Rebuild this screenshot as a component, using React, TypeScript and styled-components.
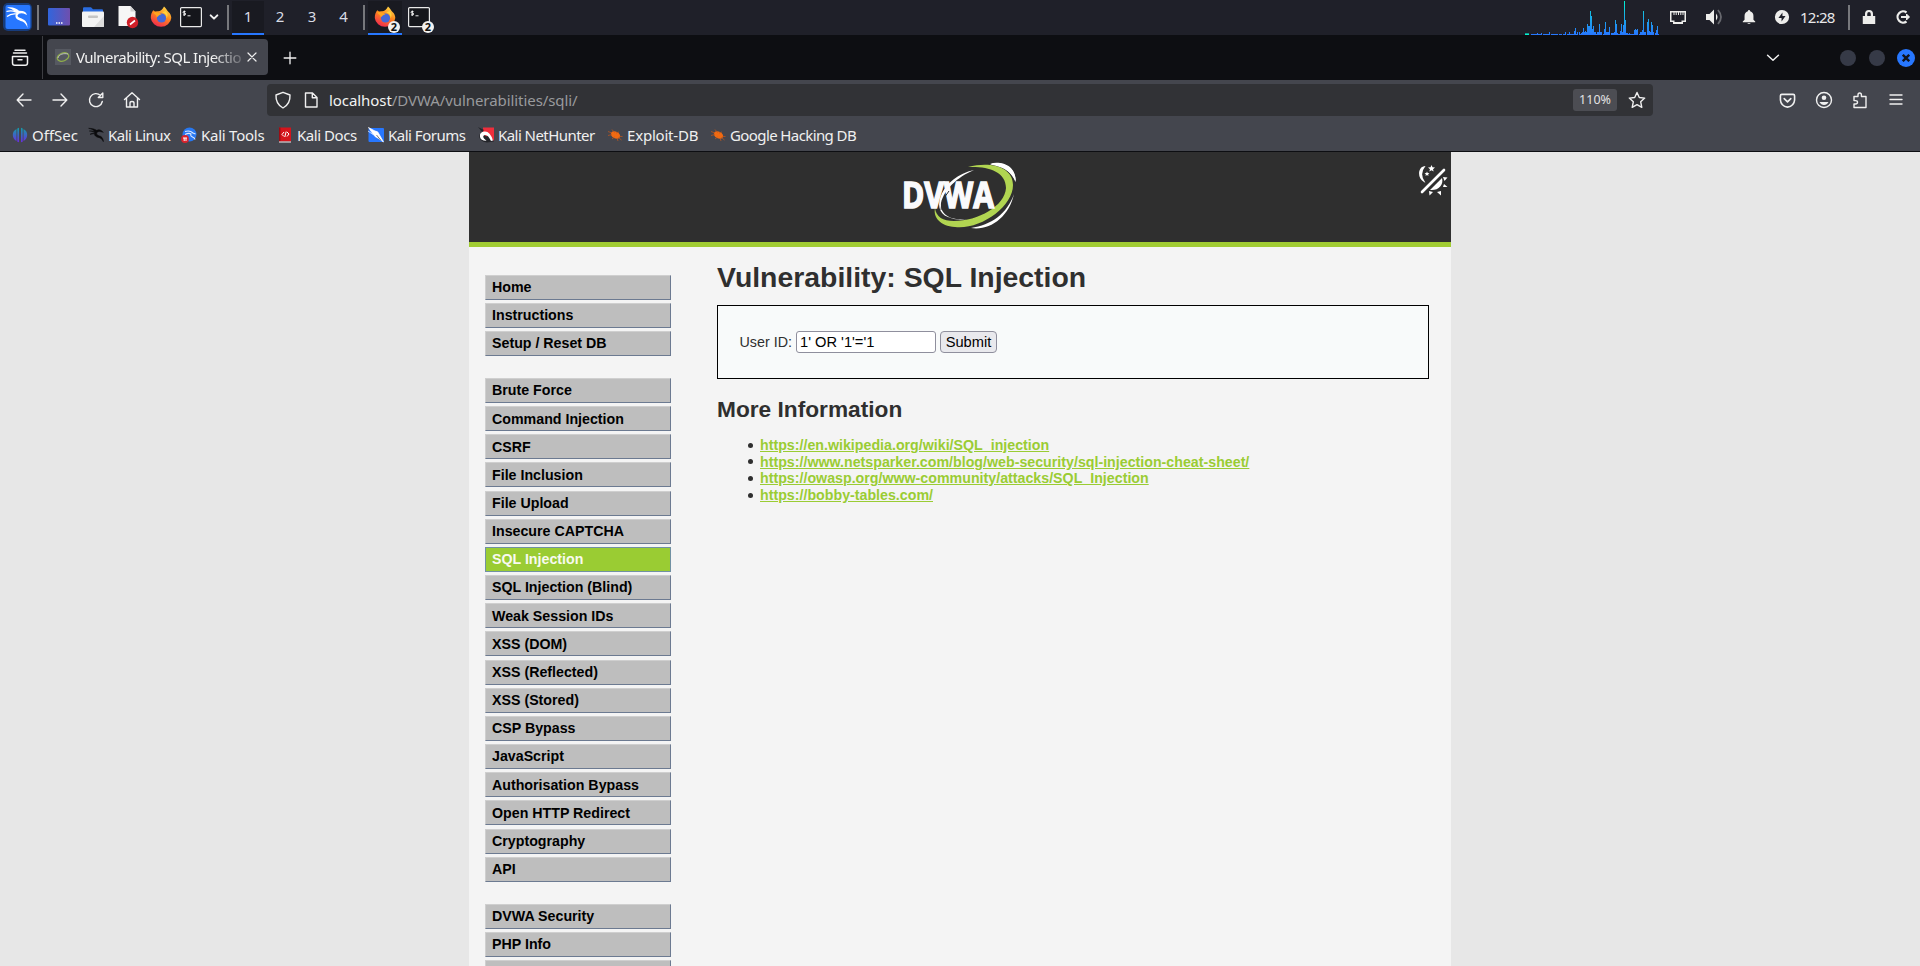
import React from 'react';
import styled, { createGlobalStyle } from 'styled-components';

const ui = '"Noto Sans", "Open Sans", sans-serif';
const page = '"Liberation Sans", Arial, sans-serif';

const Global = createGlobalStyle`
  html, body { margin: 0; padding: 0; }
  body { overflow: hidden; background: #e7e7e7; font-family: ${page}; }
  * { box-sizing: border-box; }
  svg { flex: none; }
`;

const Screen = styled.div`
  width: 1920px;
  height: 966px;
  display: flex;
  flex-direction: column;
  overflow: hidden;
`;

/* ---------- desktop panel ---------- */
const Panel = styled.header`
  height: 35px;
  flex: none;
  display: flex;
  align-items: center;
  background: #1f2029;
  color: #e8e8ea;
  font: 15px ${ui};
`;
const Slot = styled.span<{ $w: number; $active?: boolean }>`
  width: ${p => p.$w}px;
  height: 34px;
  flex: none;
  display: flex;
  align-items: center;
  justify-content: center;
  position: relative;
  background: ${p => (p.$active ? '#191a21' : 'transparent')};
  border-bottom: 2px solid ${p => (p.$active ? '#2777ff' : 'transparent')};
`;
const Bar = styled.i<{ $m: string }>`
  width: 2px;
  height: 25px;
  flex: none;
  background: #77787c;
  margin: ${p => p.$m};
`;
const Workspace = styled(Slot)`
  color: #d9dce4;
  padding-bottom: 1px;
`;
const Badge = styled.b`
  position: absolute;
  right: 2px;
  bottom: 0;
  width: 12px;
  height: 12px;
  border-radius: 6px;
  background: #f2f2f0;
  color: #111;
  font: 700 11px/12px ${ui};
  text-align: center;
`;
const Spacer = styled.i`
  flex: 1;
`;
const Clock = styled.span`
  width: 36px;
  margin-left: 1px;
  white-space: nowrap;
  letter-spacing: -0.75px;
  font-size: 15px;
  line-height: 34px;
  height: 35px;
`;

/* ---------- browser chrome ---------- */
const TabStrip = styled.div`
  height: 45px;
  flex: none;
  display: flex;
  align-items: center;
  background: #0d0e12;
  color: #f0f0f0;
`;
const RecentButton = styled.span`
  width: 43px;
  height: 43px;
  display: flex;
  align-items: center;
  justify-content: center;
  padding-right: 3px;
  border-right: 1px solid #3d3e43;
`;
const Tab = styled.div`
  width: 221px;
  height: 36px;
  margin: -1px 0 0 4px;
  padding: 0 7px 0 8px;
  border-radius: 4px;
  background: #44464e;
  display: flex;
  align-items: center;
  font: 15px ${ui};
  color: #f2f2f2;
`;
const TabTitle = styled.span`
  width: 166px;
  margin-left: 5px;
  flex: none;
  white-space: nowrap;
  letter-spacing: -0.55px;
  mask-image: linear-gradient(90deg, #000 136px, rgba(0, 0, 0, 0.15) 168px);
`;
const WindowDot = styled.i<{ $close?: boolean }>`
  width: ${p => (p.$close ? 18 : 16)}px;
  height: ${p => (p.$close ? 18 : 16)}px;
  border-radius: 50%;
  background: ${p => (p.$close ? '#2777ff' : '#363a47')};
  margin-left: ${p => (p.$close ? 12 : 13)}px;
  display: flex;
  align-items: center;
  justify-content: center;
`;
const NavBar = styled.div`
  height: 40px;
  flex: none;
  display: flex;
  align-items: center;
  background: #44464e;
  color: #f2f2f2;
`;
const IconCell = styled.span<{ $w: number; $pl?: number }>`
  width: ${p => p.$w}px;
  padding-left: ${p => p.$pl ?? 0}px;
  flex: none;
  display: flex;
  align-items: center;
  justify-content: center;
`;
const UrlBar = styled.div`
  width: 1386px;
  height: 32px;
  border-radius: 4px;
  background: #313236;
  display: flex;
  align-items: center;
  font: 15px ${ui};
  color: #999a9d;
`;
const Url = styled.span`
  margin-left: 6px;
  letter-spacing: -0.07px;
  flex: 1;
`;
const Host = styled.span`
  color: #f2f2f2;
`;
const ZoomLevel = styled.span`
  width: 44px;
  height: 22px;
  border-radius: 3px;
  background: #4c4d53;
  color: #e2e2e2;
  font-size: 12.5px;
  line-height: 22px;
  text-align: center;
`;
const Bookmarks = styled.div`
  height: 32px;
  flex: none;
  display: flex;
  align-items: center;
  background: #44464e;
  border-bottom: 1px solid #0d0e12;
  padding-left: 12px;
  font: 15px/20px ${ui};
  color: #f0f0f0;
`;
const Bookmark = styled.span<{ $w: number; $ls: number }>`
  width: ${p => p.$w}px;
  flex: none;
  display: flex;
  align-items: center;
  gap: 4px;
  white-space: nowrap;
  letter-spacing: ${p => p.$ls}px;
  padding-bottom: 1px;
`;

/* ---------- DVWA page ---------- */
const Viewport = styled.main`
  flex: 1;
  min-height: 0;
  display: flex;
  justify-content: center;
  background: #e7e7e7;
`;
const Container = styled.div`
  width: 982px;
  background: #f4f4f4;
  overflow: hidden;
`;
const Banner = styled.div`
  height: 95px;
  background: #2f2f2f;
  border-bottom: 5px solid #a1cc33;
  display: flex;
  justify-content: flex-end;
`;
const LogoCell = styled.div`
  width: 120px;
  margin-right: 395px;
  padding-top: 8px;
`;
const ThemeCell = styled.div`
  width: 34px;
  padding-top: 13px;
`;
const Columns = styled.div`
  display: flex;
`;
const Menu = styled.nav`
  width: 186px;
  margin: 27.7px 0 0 16px;
`;
const MenuBlock = styled.ul`
  list-style: none;
  margin: 0 0 22px;
  padding: 0;
`;
const MenuItem = styled.li<{ $on?: boolean }>`
  height: 25px;
  margin-bottom: 3.16px;
  padding: 0.35px 0 0 6px;
  border: 1px solid;
  border-color: ${p => (p.$on ? '#7191a3' : '#cfcfcf #6c7a91 #6c7a91 #cfcfcf')};
  background: ${p => (p.$on ? '#9acc33' : '#bebebe')};
  color: ${p => (p.$on ? '#f8faf0' : '#000')};
  font: 700 14.23px/23px ${page};

  &:last-child {
    margin-bottom: 0;
  }
`;
const Content = styled.section`
  width: 712px;
  margin: 14px 0 0 46px;
  color: #2f2f2f;
  font-size: 14.3px;
`;
const Title = styled.h1`
  margin: 0;
  font-size: 28.4px;
  line-height: 33px;
  height: 44px;
`;
const FormBox = styled.form`
  height: 74px;
  border: 1px solid #000;
  background: #f8fafa;
  padding: 25px 0 0 21.5px;
  display: flex;
  align-items: flex-start;
`;
const Label = styled.label`
  width: 53px;
  line-height: 22px;
  margin-right: 3.5px;
  white-space: nowrap;
`;
const Field = styled.input`
  width: 140px;
  height: 22px;
  border: 1px solid #8f8f9d;
  border-radius: 3px;
  background: #fff;
  padding: 0 3px;
  font: 14.67px ${page};
  color: #000;
  margin-right: 4px;
`;
const Submit = styled.button`
  width: 57px;
  height: 22px;
  border: 1px solid #8f8f9d;
  border-radius: 4px;
  background: #e9e9ed;
  padding: 0;
  font: 14.67px ${page};
  color: #000;
`;
const Subtitle = styled.h2`
  margin: 17px 0 0;
  font-size: 22.7px;
  line-height: 26px;
`;
const Links = styled.ul`
  list-style: none;
  margin: 15px 0 0;
  padding-left: 31px;
  font-size: 14.23px;
  line-height: 16.6px;
`;
const LinkRow = styled.li`
  display: flex;
  align-items: center;
  gap: 7px;

  &::before {
    content: '';
    width: 5px;
    height: 5px;
    border-radius: 50%;
    background: #2f2f2f;
  }
`;
const Anchor = styled.a`
  color: #9acc33;
  font-weight: 700;
  text-decoration: underline;
`;

/* ---------- drawings ---------- */
const dragonPath =
  'M1 2c5 0 9 1 12 3l3-1c3 0 5 2 7 4l-4-1c-3-1-6 0-6 3 0 2 3 3 6 4 3 2 4 5 4 8-1-3-3-5-6-6-5-1-8-3-7-7C9 7 5 6 2 6c4 0 6 0 8 1C8 4 5 3 1 2zM3 11c3-2 5-2 7-1-3 0-5 1-7 1z';
const Dragon = ({ s, c }: { s: number; c: string }) => (
  <svg width={s} height={s} viewBox="0 0 24 24"><path d={dragonPath} fill={c} stroke={c} strokeWidth=".8" /></svg>
);

const KaliMenuIcon = () => (
  <svg width="32" height="34" viewBox="0 0 32 34">
    <rect x="2" y="3" width="29" height="28" rx="5" fill="#173c7c" />
    <rect x="4.500" y="5" width="25" height="24" rx="2" fill="#2777ff" />
    <path d="M6 7.500c5-1 9 .5 12 3.200l3.500.3q3.500.5 4.500 4l-3.500-1.500q-5-1-6 2c0 2.500 5 2.500 8 5.500q2.500 3 2 7-1.500-5-5-6.500c-5-1.500-7.500-3-7-6.500l.8-2.300Q11 8.500 6 7.500z" fill="#fff" />
    <path d="M5.500 11.500q5-1.500 9.500.7M6 16.500q4-3.300 9-2.600" fill="none" stroke="#fff" strokeWidth="1.300" />
  </svg>
);
const Firefox = () => (
  <svg width="22" height="22" viewBox="0 0 22 22">
    <defs>
      <linearGradient id="fx" x1=".8" y1="0" x2=".3" y2="1">
        <stop offset="0" stopColor="#ffde4a" /><stop offset=".45" stopColor="#ff8a1e" /><stop offset="1" stopColor="#f0274f" />
      </linearGradient>
    </defs>
    <path d="M14 .5c2 1.500 2.500 3.500 4.500 5.500 1.500 1 2.800 3.500 2.800 6A10.300 9.800 0 0 1 .8 12C.7 8.500 1.800 6 3.300 4.200L5 5.500l2.500-.3C10 5.500 12.500 4 14 .5z" fill="url(#fx)" />
    <circle cx="11.500" cy="12" r="4.600" fill="#4468d8" />
    <path d="M3 6.500C6 5 9 6.500 11.500 8.500 9 8.500 8.500 10 6.500 11.500 7 9 5 9 3 6.500z" fill="#ffa51f" />
    <path d="M12 6.500c3 .5 5 3 4.500 6 2-3 1-6-1-7.500z" fill="#ffd23c" />
  </svg>
);
const Terminal = () => (
  <svg width="22" height="22" viewBox="0 0 22 22">
    <rect x=".6" y="1.600" width="20.800" height="19" rx="1" fill="#15161b" stroke="#e9e9e9" strokeWidth="1.200" />
    <path d="M5.500 5.500H4q-1 0-1 .8t1 .8h.7q1 0 1 .9t-1 .9H3M4.300 4.500v5.400M7.500 9.800h3" fill="none" stroke="#fff" strokeWidth=".9" />
  </svg>
);
const DesktopIcon = () => (
  <svg width="22" height="18" viewBox="0 0 22 18">
    <defs><linearGradient id="dk"><stop offset="0" stopColor="#3165dc" /><stop offset="1" stopColor="#6f4fae" /></linearGradient></defs>
    <rect width="22" height="17.500" rx="1" fill="url(#dk)" />
    <path d="M8 15h1.500M10.500 15H12M13 15h1.500" stroke="#fff" strokeWidth="1.300" />
  </svg>
);
const FolderIcon = () => (
  <svg width="22" height="20" viewBox="0 0 22 20">
    <path d="M1 6V1.500Q1 .3 2 .3h7l2 2h9q1 0 1 1V6z" fill="#2a6ce0" />
    <rect y="4.500" width="22" height="15.500" rx="1" fill="#f3f3f3" />
    <path d="M22 9v10q0 1-1 1h-9z" fill="#dcdcdc" /><rect x="6" y="8.500" width="10" height="2.500" rx="1" fill="#c4c4c4" />
  </svg>
);
const DocIcon = () => (
  <svg width="22" height="24" viewBox="0 0 22 24">
    <path d="M1.500 1h12l5 5.500V21h-17z" fill="#f6f6f6" /><path d="M13.500 1v5.500h5z" fill="#cfcfcf" />
    <circle cx="15.500" cy="17.500" r="5.700" fill="#cf1f28" /><path d="m13 19.500 5-4" stroke="#fff" strokeWidth="1.700" />
  </svg>
);

const load: [number, number][] = [
  [31, 1], [32, 1], [34, 1], [37, 2], [38, 1], [41, 2], [45, 1], [46, 1], [49, 3], [52, 1], [53, 1], [54, 1], [57, 1], [61, 1], [65, 3], [69, 3], [70, 1],
  [73, 1], [74, 4], [75, 7], [77, 3], [79, 3], [80, 1], [81, 2], [82, 3], [83, 7], [84, 3], [85, 4], [86, 3], [87, 11], [88, 9], [89, 9], [90, 24], [91, 19],
  [92, 6], [93, 9], [94, 3], [95, 3], [97, 3], [98, 3], [99, 11], [100, 3], [101, 3], [104, 6], [105, 13], [106, 3], [107, 3], [108, 3], [109, 8], [111, 2],
  [112, 2], [113, 2], [114, 3], [115, 15], [116, 11], [117, 2], [118, 1], [120, 4], [121, 11], [122, 3], [123, 10], [124, 34], [125, 15], [126, 2], [127, 2],
  [128, 1], [129, 2], [130, 1], [132, 1], [133, 1], [134, 5], [135, 6], [136, 5], [137, 6], [140, 3], [141, 3], [142, 5], [143, 24], [144, 3], [145, 3],
  [147, 13], [148, 16], [149, 4], [150, 3], [151, 13], [152, 10], [153, 3], [155, 2], [156, 5], [157, 9], [158, 1],
];
const LoadGraph = () => (
  <svg width="136" height="34" viewBox="24 0 136 34" shapeRendering="crispEdges">
    <defs>
      <linearGradient id="ld" gradientUnits="userSpaceOnUse" x1="0" y1="0" x2="0" y2="34">
        <stop offset="0" stopColor="#00f5d0" /><stop offset=".4" stopColor="#18b6e4" /><stop offset="1" stopColor="#2777ff" />
      </linearGradient>
    </defs>
    <rect x="25" y="32" width="4" height="1" fill="#149a8f" /><rect x="25" y="33" width="4" height="1" fill="#00f5d0" />
    {load.map(([x, h]) => <rect key={x} x={x} y={34 - h} width="1" height={h} fill="url(#ld)" />)}
    <path d="M31 33.500h127" stroke="#2777ff" strokeDasharray="3 1 2 2" />
  </svg>
);

const Line = ({ d, s = 18, w = 1.4, children }: { d: string; s?: number; w?: number; children?: React.ReactNode }) => (
  <svg width={s} height={s} viewBox="0 0 18 18" fill="none" stroke="#f0f0f0" strokeWidth={w} strokeLinecap="round" strokeLinejoin="round">
    <path d={d} />{children}
  </svg>
);
const Solid = ({ d, s = 18, children }: { d: string; s?: number; children?: React.ReactNode }) => (
  <svg width={s} height={s} viewBox="0 0 18 18" fill="#ededeb"><path d={d} fillRule="evenodd" />{children}</svg>
);

const Favicon = () => (
  <svg width="16" height="16" viewBox="0 0 16 16">
    <rect width="16" height="16" fill="#565961" />
    <ellipse cx="8" cy="8" rx="6" ry="4" fill="none" stroke="#8fae4a" strokeWidth="1.300" transform="rotate(-20 8 8)" />
    <path d="M3 9c1-4 6-5 10-4" stroke="#d0d0d0" fill="none" strokeWidth=".8" />
  </svg>
);
const OffSec = () => (
  <svg width="16" height="16" viewBox="0 0 16 16">
    <defs><linearGradient id="os" x2="0" y2="1"><stop offset="0" stopColor="#11a0a8" /><stop offset="1" stopColor="#6a2be0" /></linearGradient></defs>
    <path d="M7 .8v14.500L5.300 14.700V1.500zM9 .8v14.500l1.700-.6V1.500zM4.500 2v12Q1 12 .8 8T4.500 2zM11.500 2v12q3.500-2 3.700-6T11.500 2z" fill="url(#os)" />
  </svg>
);
const ToolsIcon = () => (
  <svg width="16" height="16" viewBox="0 0 16 16">
    <circle cx="8.500" cy="7.500" r="7" fill="#2878f0" />
    <path d="M4 4.500q5-1.500 8 1.500l2.500 1M4 7.500q4-2 6-.5-1 2 1.500 3t2.500 2.500" fill="none" stroke="#dbe8ff" strokeWidth="1.100" />
    <circle cx="4" cy="12" r="3.900" fill="#d9232d" /><path d="M2 11h4M3.200 11v3M5 11v3" stroke="#fff" />
  </svg>
);
const DocsIcon = () => (
  <svg width="16" height="16" viewBox="0 0 16 16">
    <path d="M2 .5h12v14H2z" fill="#d5141c" /><path d="M2 .5h1.500v14H2z" fill="#9b0d14" /><path d="M2 14.500h12v1H2z" fill="#eee" />
    <path d="m7 5-2 2.500 2 2M10 5l2 2-2 2.500M9.200 4.500 7.800 10" stroke="#fff" fill="none" />
  </svg>
);
const ForumsIcon = () => (
  <svg width="16" height="16" viewBox="0 0 16 16">
    <rect x=".5" y="1" width="15.500" height="14" rx="1" fill="#2777ff" />
    <path d="M.5.500 7 4q3 0 4 3l4.500 8-5-3.500-3.500-2Q4 6 .5.500zM0 4l5 3.500" fill="#fff" stroke="#fff" strokeWidth=".7" />
    <path d="m8.500 8 4.500 5.500" stroke="#555" strokeWidth=".8" />
  </svg>
);
const HunterIcon = () => (
  <svg width="16" height="16" viewBox="0 0 16 16">
    <path d="M5 .5h11v13H5z" fill="#ee2e3c" />
    <path d="M0 0l6 3-5 5q0 7 8 7.500l7-1-5-7-3 2z" fill="#24252a" />
    <path d="M2 10Q1 5 6.500 4.500T15 13.500l-2 .5Q10 7.500 7 8t-1 3.500l2.500 2.200Q3 14 2 10z" fill="#fff" />
  </svg>
);
const BugIcon = () => (
  <svg width="16" height="16" viewBox="0 0 16 16">
    <ellipse cx="8.500" cy="8" rx="5" ry="3.300" fill="#f06a12" transform="rotate(28 8.500 8)" />
    <path d="M1 4.500l4 1.500M1 8.500l4-1M5 2.500l2.500 3M12 5l-3 1M15.500 9.500l-3 0M11 14l-1-3M5 12l2.500-2M14.500 13l-3-2.500" stroke="#b9561f" strokeWidth=".8" />
  </svg>
);

const DvwaLogo = () => (
  <svg width="120" height="74" viewBox="0 0 120 74">
    <path d="M88 4.500C96 1 114 4 114 22 111 14 104 7 88 4.500z" fill="#fff" />
    <path d="M88 3.500C100 1 114 5 113.500 22 109 11 100 5 88 3.500z" fill="#fff" />
    <path d="M72 10C40 17 27 50 46 57q8 4 19 2C45 61 38 52 39 43 42 30 55 17 72 10z" fill="#fff" />
    <path d="M66 7C89 1 111 7 111 25c0 22-33 45-58 42C38 66 31 57 33 48c1 9 8 13 19 13 24 0 51-15 52-33C104 11 85 6 66 7z" fill="#b1d551" />
    <path d="M112 34c-5 23-24 37-43 34 20-3 36-14 43-34z" fill="#fff" />
    <text x="0" y="48" textLength="92" lengthAdjust="spacingAndGlyphs" fontFamily="Open Sans, Noto Sans, sans-serif" fontWeight="700" fontSize="35" fill="#fafafc" stroke="#fafafc" strokeWidth="1.500">DVWA</text>
    <path d="M47 31Q39 41 39 50" stroke="#2f2f2f" strokeWidth="1" fill="none" />
  </svg>
);
const ThemeIcon = () => (
  <svg width="32" height="32" viewBox="0 0 32 32" fill="#fff">
    <path d="M8.500 1C1 1-.5 13 7 17q2 1 1 0Q2 9 8.500 1z" />
    <path d="m14.500 0 1 2.300 2.500.2-2 1.700.7 2.400-2.200-1.300-2.200 1.300.7-2.400-2-1.700 2.500-.2zM10 6.500l.7 1.600 1.700.2-1.300 1.100.4 1.600-1.500-.9-1.500.9.400-1.600-1.300-1.100 1.700-.2z" />
    <path d="M5 27 27 5" stroke="#fff" strokeWidth="2.600" strokeLinecap="round" />
    <path d="M13 25 25 13c2 7-4 13-12 12zM26 12l4.500.5-3 3.500zM27 19l3.500 3h-4.500zM20 27l4-1v4.500zM12 26l4 1-3.500 3.500z" />
  </svg>
);

const bookmarks: [string, number, number, React.ReactNode][] = [
  ['OffSec', 76, 0, <OffSec />],
  ['Kali Linux', 93, -0.5, <Dragon s={16} c="#0b0b0d" />],
  ['Kali Tools', 96, -0.25, <ToolsIcon />],
  ['Kali Docs', 91, -0.45, <DocsIcon />],
  ['Kali Forums', 110, -0.5, <ForumsIcon />],
  ['Kali NetHunter', 129, -0.55, <HunterIcon />],
  ['Exploit-DB', 103, -0.2, <BugIcon />],
  ['Google Hacking DB', 160, -0.6, <BugIcon />],
];

const menu: string[][] = [
  ['Home', 'Instructions', 'Setup / Reset DB'],
  ['Brute Force', 'Command Injection', 'CSRF', 'File Inclusion', 'File Upload', 'Insecure CAPTCHA', 'SQL Injection', 'SQL Injection (Blind)',
    'Weak Session IDs', 'XSS (DOM)', 'XSS (Reflected)', 'XSS (Stored)', 'CSP Bypass', 'JavaScript', 'Authorisation Bypass',
    'Open HTTP Redirect', 'Cryptography', 'API'],
  ['DVWA Security', 'PHP Info', ''],
];

const links = [
  'https://en.wikipedia.org/wiki/SQL_injection',
  'https://www.netsparker.com/blog/web-security/sql-injection-cheat-sheet/',
  'https://owasp.org/www-community/attacks/SQL_Injection',
  'https://bobby-tables.com/',
];

export default function App() {
  return (
    <Screen>
      <Global />
      <Panel>
        <Slot $w={33}><KaliMenuIcon /></Slot>
        <Bar $m="0 3px 0 4px" />
        <Slot $w={33}><DesktopIcon /></Slot>
        <Slot $w={35}><FolderIcon /></Slot>
        <Slot $w={36}><DocIcon /></Slot>
        <Slot $w={30}><Firefox /></Slot>
        <Slot $w={30}><Terminal /></Slot>
        <Slot $w={16}><Line s={12} w={3} d="M4 6.500 9 11.500 14 6.500" /></Slot>
        <Bar $m="0 3px 0 5px" />
        <Workspace $w={32} $active>1</Workspace>
        <Workspace $w={32}>2</Workspace>
        <Workspace $w={32}>3</Workspace>
        <Workspace $w={31}>4</Workspace>
        <Bar $m="0 3px 0 4px" />
        <Slot $w={34} $active><Firefox /><Badge>2</Badge></Slot>
        <Slot $w={34}><Terminal /><Badge>2</Badge></Slot>
        <Spacer />
        <LoadGraph />
        <Slot $w={35}>
          <Solid d="M1 3h16v11h-3v2H4v-2H1zM2.500 4.500v8h3V14h7v-1.500h3v-8h-1V7h-1V4.500h-1.200V7h-1V4.500H10V7H9V4.500H7.700V7h-1V4.500H5.500V7h-1V4.500z" />
        </Slot>
        <Slot $w={37}>
          <Solid d="M1 6h3.500L9 1.500v15L4.500 12H1z">
            <path d="M11 5.500q3 3.500 0 7z" /><path d="M13 2q6 7 0 14" stroke="#67686e" strokeWidth="1.800" fill="none" />
          </Solid>
        </Slot>
        <Slot $w={33}><Solid s={16} d="M9 1q1.200 0 1.300 1.500Q14 3.500 14 8v4l2 2v1H2v-1l2-2V8q0-4.500 3.700-5.500Q7.800 1 9 1zM7 16h4q-2 2-4 0z" /></Slot>
        <Slot $w={34}><Solid s={16} d="M9 1a8 8 0 1 0 0 16A8 8 0 0 0 9 1zM9.500 4v4H13l-4.500 6v-4H5z" /></Slot>
        <Clock>12:28</Clock>
        <Bar $m="0 3px 0 12px" />
        <Slot $w={32}><Solid s={16} d="M4.500 8V5.500Q4.500 1 9 1t4.500 4.500V8H16v9H2V8zM7 8h4V5.500q0-2-2-2t-2 2z" /></Slot>
        <Slot $w={35}>
          <svg width="16" height="16" viewBox="0 0 16 16" fill="none" stroke="#ededeb" strokeWidth="2.200"><path d="M11.500 3.500a5.600 5.600 0 1 0 0 9M6 8h8" /><path d="m11.500 5 3 3-3 3z" fill="#ededeb" strokeWidth="1" /></svg>
        </Slot>
      </Panel>

      <TabStrip>
        <RecentButton><Line d="M4 1.300h10M2.500 4h13M1.500 7.500h15v6.500q0 2.300-2.300 2.300H3.800q-2.300 0-2.300-2.300zM7 10.800h4" w={1.5} /></RecentButton>
        <Tab>
          <Favicon />
          <TabTitle>Vulnerability: SQL Injectio</TabTitle>
          <Line s={18} w={1.2} d="M6 5l8 8M14 5l-8 8" />
        </Tab>
        <IconCell $w={43}><Line s={14} w={1.7} d="M9 1.500v15M1.500 9h15" /></IconCell>
        <Spacer />
        <IconCell $w={20}><Line s={14} w={1.9} d="M2 5.500 9 12l7-6.500" /></IconCell>
        <IconCell $w={44} />
        <WindowDot />
        <WindowDot />
        <WindowDot $close>
          <svg width="8" height="8" viewBox="0 0 8 8" stroke="#10131c" strokeWidth="2.400"><path d="m.8.8 6.400 6.400M7.200.8.8 7.200" /></svg>
        </WindowDot>
        <IconCell $w={5} />
      </TabStrip>

      <NavBar>
        <IconCell $w={6} />
        <IconCell $w={36}><Line d="M16 9H2.500M8 3 2.200 9 8 15" /></IconCell>
        <IconCell $w={36}><Line d="M2 9h13.500M10 3l5.800 6-5.800 6" /></IconCell>
        <IconCell $w={36}><Line d="M15.300 10.500A6.500 6.500 0 1 1 13.500 4.500M15.800 2v4.500h-4.500z" /></IconCell>
        <IconCell $w={35}><Line d="M1.500 8.500 9 1.800l7.500 6.700M3.500 7v9h11V7M7 16v-4q0-1.500 2-1.500t2 1.500v4" /></IconCell>
        <IconCell $w={118} />
        <UrlBar>
          <IconCell $w={32}><Line d="M9 1.300 16 4q.5 9-7 13Q1.500 13 2 4z" /></IconCell>
          <IconCell $w={24}><Line d="M3.500 2h7L15 6.500V16H3.500zM10.300 2v4.700H15" /></IconCell>
          <Url><Host>localhost</Host>/DVWA/vulnerabilities/sqli/</Url>
          <ZoomLevel>110%</ZoomLevel>
          <IconCell $w={36} $pl={4}><Line d="m9 1.500 2.300 5 5.400.6-4 3.700 1.100 5.500L9 13.600l-4.800 2.700 1.100-5.500-4-3.700 5.400-.6z" /></IconCell>
        </UrlBar>
        <Spacer />
        <IconCell $w={36}><Line s={17} d="M3 2.500h12q1.500 0 1.500 1.500v4.500Q16 15 9 16 2 15 1.500 8.500V4Q1.500 2.500 3 2.500zM5.500 7 9 10.500 12.500 7" w={1.7} /></IconCell>
        <IconCell $w={37}>
          <Line d="M9 1.500a7.500 7.500 0 1 0 0 15 7.500 7.500 0 1 0 0-15z">
            <circle cx="9" cy="6.800" r="2.300" fill="#f0f0f0" stroke="none" /><path d="M4.500 11h9q-1.500 3-4.500 3t-4.500-3z" fill="#f0f0f0" stroke="none" />
          </Line>
        </IconCell>
        <IconCell $w={36}><Line d="M3 5.500h4V4q0-2 1.700-2t1.700 2v1.500h4.600v11H3v-3.500h1.500q2 0 2-1.700t-2-1.700H3z" /></IconCell>
        <IconCell $w={36}><Line d="M3 4h12M3 8.500h12M3 13h12" /></IconCell>
        <IconCell $w={6} />
      </NavBar>

      <Bookmarks>
        {bookmarks.map(([name, w, ls, icon]) => <Bookmark key={name} $w={w} $ls={ls}>{icon}{name}</Bookmark>)}
      </Bookmarks>

      <Viewport>
        <Container>
          <Banner>
            <LogoCell><DvwaLogo /></LogoCell>
            <ThemeCell><ThemeIcon /></ThemeCell>
          </Banner>
          <Columns>
            <Menu>
              {menu.map((block, i) => (
                <MenuBlock key={i}>
                  {block.map(item => <MenuItem key={item} $on={item === 'SQL Injection'}>{item}</MenuItem>)}
                </MenuBlock>
              ))}
            </Menu>
            <Content>
              <Title>Vulnerability: SQL Injection</Title>
              <FormBox>
                <Label>User ID:</Label>
                <Field defaultValue="1' OR '1'='1" />
                <Submit type="button">Submit</Submit>
              </FormBox>
              <Subtitle>More Information</Subtitle>
              <Links>
                {links.map(href => <LinkRow key={href}><Anchor>{href}</Anchor></LinkRow>)}
              </Links>
            </Content>
          </Columns>
        </Container>
      </Viewport>
    </Screen>
  );
}
